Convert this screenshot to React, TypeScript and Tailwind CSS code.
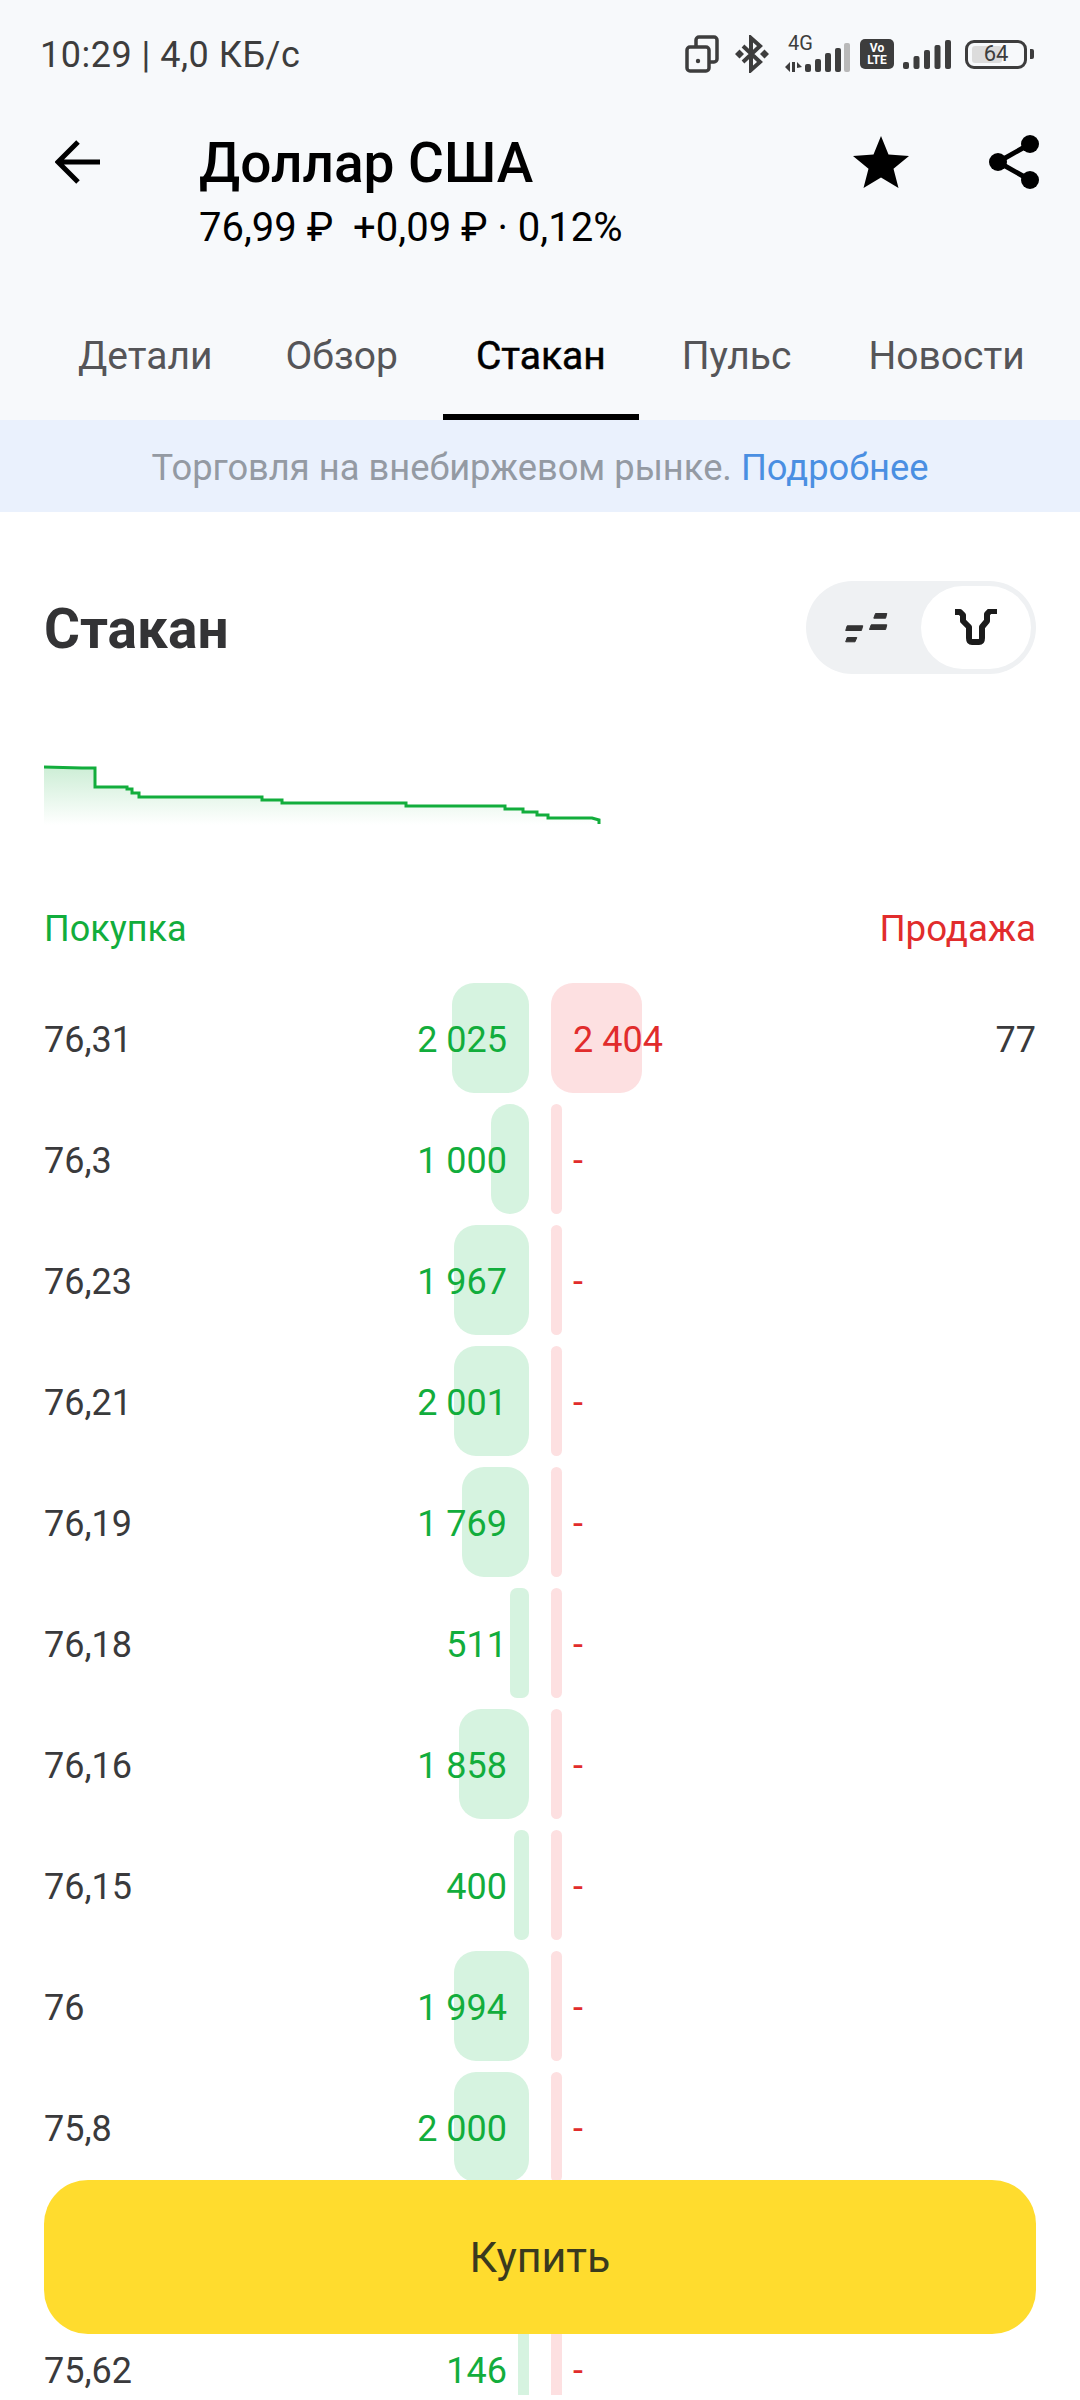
import React from "react";

const rows: { p: string; v: string; w: number; s?: string; sw?: number; sp?: string }[] = [
  { p: "76,31", v: "2 025", w: 77, s: "2 404", sw: 91, sp: "77" },
  { p: "76,3", v: "1 000", w: 38 },
  { p: "76,23", v: "1 967", w: 75 },
  { p: "76,21", v: "2 001", w: 75 },
  { p: "76,19", v: "1 769", w: 67 },
  { p: "76,18", v: "511", w: 19 },
  { p: "76,16", v: "1 858", w: 70 },
  { p: "76,15", v: "400", w: 15 },
  { p: "76", v: "1 994", w: 75 },
  { p: "75,8", v: "2 000", w: 75 },
];

const tabs: { t: string; c: string }[] = [
  { t: "Детали", c: "flex items-center px-[33px] pt-[2px]" },
  { t: "Обзор", c: "ml-[-3px] mr-[2px] flex items-center px-[33px] pt-[2px]" },
  {
    t: "Стакан",
    c: "flex items-center border-b-[6px] border-black px-[33px] pt-[8px] text-black [-webkit-text-stroke:0.5px_black]",
  },
  { t: "Пульс", c: "flex items-center px-[33px] pt-[2px]" },
  { t: "Новости", c: "ml-[1px] flex items-center px-[33px] pt-[2px]" },
];

const linePts =
  "0,27 38,28 51,28 51,47 83,47 83,49 88,49 88,53 95,53 95,57 218,57 218,60 238,60 238,63 362,63 362,66 456,66 461,66 461,69 479,69 479,72 493,72 493,75 504,75 504,78 548,78 555,80 555,84";

function Row({ r }: { r: (typeof rows)[number] }) {
  return (
    <div className="flex h-[110px] gap-[22px] text-[36px] leading-[114px]">
      <div className="relative flex flex-1 justify-between pr-[22px]">
        <div
          className="absolute inset-y-0 right-0 bg-[#d6f3e0]"
          style={{ width: r.w, borderRadius: r.w < 25 ? 7 : 22 }}
        />
        <span className="relative text-[#3a3a3c]">{r.p}</span>
        <span className="relative text-[#12ad3c]">{r.v}</span>
      </div>
      <div className="relative flex flex-1 justify-between pl-[22px]">
        <div
          className="absolute inset-y-0 left-0 bg-[#fde0e1]"
          style={{ width: r.sw ?? 11, borderRadius: r.sw ? 22 : 6 }}
        />
        <span className="relative text-[#e12c2c]">{r.s ?? "-"}</span>
        {r.sp && <span className="relative text-[#3a3a3c]">{r.sp}</span>}
      </div>
    </div>
  );
}

function Bars() {
  const hs = [7, 13, 19, 24, 29];
  return (
    <svg width="48" height="30" viewBox="0 0 48 30">
      {hs.map((h, i) => (
        <rect key={i} x={i * 10.5} y={30 - h} width="6" height={h} rx="2" fill="#3d3d3d" />
      ))}
    </svg>
  );
}

function StatusIcons() {
  return (
    <div className="flex items-center text-[#3d3d3d]">
      <svg width="34" height="38" viewBox="0 0 34 38" fill="none" stroke="#3d3d3d" strokeWidth="3.5">
        <rect x="2" y="12" width="22" height="24" rx="3" />
        <path d="M11 12V5a3 3 0 0 1 3-3h15a3 3 0 0 1 3 3v19a3 3 0 0 1-3 3h-5" />
        <circle cx="13" cy="26" r="2.2" fill="#3d3d3d" stroke="none" />
      </svg>
      <svg className="ml-[15px]" width="36" height="38" viewBox="0 0 36 38" fill="none" stroke="#3d3d3d" strokeWidth="4">
        <path d="M9 11 26 27 17 35V3l9 8L9 27" />
        <path d="M1 19l4.5-4.5L10 19l-4.5 4.5zM26 19l4.5-4.5L35 19l-4.5 4.5z" fill="#3d3d3d" stroke="none" />
      </svg>
      <div className="relative ml-[15px] h-[38px] w-[65px]">
        <span className="absolute left-[3px] top-[-3px] text-[20px] leading-[22px]">4G</span>
        <svg className="absolute bottom-0 left-0" width="65" height="30" viewBox="0 0 65 30">
          <path d="M0 24l5-5v10zM7 19h3v10H7zM12 19l5 5-5 1z" fill="#3d3d3d" />
          <rect x="20" y="21" width="6" height="8" rx="2" fill="#3d3d3d" />
          <rect x="30" y="16" width="6" height="13" rx="2" fill="#3d3d3d" />
          <rect x="40" y="10" width="6" height="19" rx="2" fill="#3d3d3d" />
          <rect x="50" y="5" width="6" height="24" rx="2" fill="#3d3d3d" />
          <rect x="59" y="0" width="6" height="29" rx="2" fill="#b9b9b9" />
        </svg>
      </div>
      <div className="ml-[10px] flex h-[30px] w-[34px] flex-col items-center justify-center rounded-[5px] bg-[#3d3d3d] text-[12px] font-bold leading-[12px] text-white">
        <span>Vo</span>
        <span>LTE</span>
      </div>
      <div className="ml-[9px]">
        <Bars />
      </div>
      <div className="relative ml-[14px] flex h-[29px] w-[62px] items-center justify-center rounded-[9px] border-[3px] border-[#3d3d3d] text-[22px] leading-none">
        <div className="absolute inset-y-[3px] left-[4px] w-[30px] rounded-[3px] bg-[#dcdcdc]" />
        <span className="relative">64</span>
      </div>
      <div className="ml-[3px] h-[10px] w-[4px] rounded-r-[2px] bg-[#3d3d3d]" />
    </div>
  );
}

export default function App() {
  return (
    <div
      className="relative h-[2400px] w-[1080px] overflow-hidden bg-white"
      style={{ fontFamily: "Roboto, 'Noto Sans', sans-serif" }}
    >
      <div className="bg-[#f7f9fb]">
        <div className="flex h-[108px] items-center justify-between pl-[40px] pr-[46px]">
          <span className="pt-[2px] text-[36px] tracking-[0.5px] text-[#3d3d3d]">10:29 | 4,0 КБ/с</span>
          <StatusIcons />
        </div>
        <div className="flex h-[182px] items-start pl-[55px] pr-[40px]">
          <svg className="mt-[32px]" width="46" height="44" viewBox="0 0 46 44" fill="none" stroke="#000" strokeWidth="5">
            <path d="M45 22H3M23 2 3 22l20 20" />
          </svg>
          <div className="ml-[98px] flex-1 pt-[23px]">
            <div className="text-[55px] font-medium leading-[64px] text-black">Доллар США</div>
            <div className="mt-[8px] whitespace-pre text-[40px] leading-[50px] text-black">{"76,99 ₽  +0,09 ₽ · 0,12%"}</div>
          </div>
          <svg className="ml-[1px] mt-[28px]" width="56" height="52" viewBox="0 0 56 52" fill="#000">
            <path d="M28 0l7.5 18.5L56 20 40.5 32.8 45.5 52 28 41.5 10.5 52l5-19.2L0 20l20.5-1.5z" />
          </svg>
          <svg className="ml-[79px] mt-[26px]" width="52" height="56" viewBox="0 0 52 56" fill="#000" stroke="#000">
            <circle cx="42" cy="10" r="9" strokeWidth="0" />
            <circle cx="10" cy="28" r="9" strokeWidth="0" />
            <circle cx="42" cy="46" r="9" strokeWidth="0" />
            <path d="M42 10 10 28l32 18" fill="none" strokeWidth="5" />
          </svg>
        </div>
        <div className="flex h-[130px] gap-[10px] pl-[45px] text-[39px] text-[#555558]">
          {tabs.map((t) => (
            <div key={t.t} className={t.c}>
              {t.t}
            </div>
          ))}
        </div>
      </div>
      <div className="flex h-[92px] items-center justify-center bg-[#eaf1fd] pt-[4px] text-[36.3px] text-[#949aa3]">
        <span>
          Торговля на внебиржевом рынке. <span className="text-[#4a8fe2]">Подробнее</span>
        </span>
      </div>
      <div className="px-[44px]">
        <div className="flex items-center justify-between pt-[69px]">
          <h1 className="pt-[3px] text-[55px] font-bold text-[#333335]">Стакан</h1>
          <div className="flex h-[93px] w-[230px] items-center justify-between rounded-full bg-[#eff1f3] pl-[39px] pr-[5px]">
            <svg width="43" height="30" viewBox="0 0 43 30" fill="#333" stroke="#333" strokeWidth="1" strokeLinejoin="round">
              <path d="M2.2 12.8h15.6l-1.4 4.7H.7zM2.2 24.5h9.6l-1.8 4.3H.7zM26.2 11.8h15.6l-1.2 4.7H24.5zM30.5.5h11.3l-1.2 4.7H28.8z" />
            </svg>
            <div className="flex h-[83px] w-[110px] items-center justify-center rounded-full bg-white">
              <svg width="42" height="37" viewBox="0 0 42 37" fill="none" stroke="#1b1b1b" strokeWidth="6" strokeLinejoin="round">
                <path d="M0 3h5l3 3v6l6 6v11q0 4 3 4h7q3 0 3-4V18l5-6V5l3-3h7" />
              </svg>
            </div>
          </div>
        </div>
        <svg className="mt-[66px] block" width="992" height="100" viewBox="0 0 992 100">
          <defs>
            <linearGradient id="g" x1="0" y1="0" x2="0" y2="1">
              <stop offset="0%" stopColor="#cdeed6" />
              <stop offset="100%" stopColor="#ffffff" />
            </linearGradient>
          </defs>
          <polygon points={`0,85 ${linePts} 555,85`} fill="url(#g)" />
          <polyline points={linePts} fill="none" stroke="#12ad3c" strokeWidth="3" />
        </svg>
        <div className="mt-[69px] flex h-[40px] items-center justify-between text-[36px]">
          <span className="text-[#12ad3c]">Покупка</span>
          <span className="text-[36.7px] text-[#e12c2c]">Продажа</span>
        </div>
        <div className="mt-[34px] flex flex-col gap-[11px]">
          {rows.map((r) => (
            <Row key={r.p} r={r} />
          ))}
          <div className="h-[110px]" />
          <Row r={{ p: "75,62", v: "146", w: 11 }} />
        </div>
      </div>
      <button className="absolute left-[44px] top-[2180px] flex h-[154px] w-[992px] items-center justify-center rounded-[44px] bg-[#ffdc2e] text-[43px] text-[#3a3a1e]">
        Купить
      </button>
      <div className="absolute inset-x-0 bottom-0 h-[5px] bg-white" />
    </div>
  );
}
